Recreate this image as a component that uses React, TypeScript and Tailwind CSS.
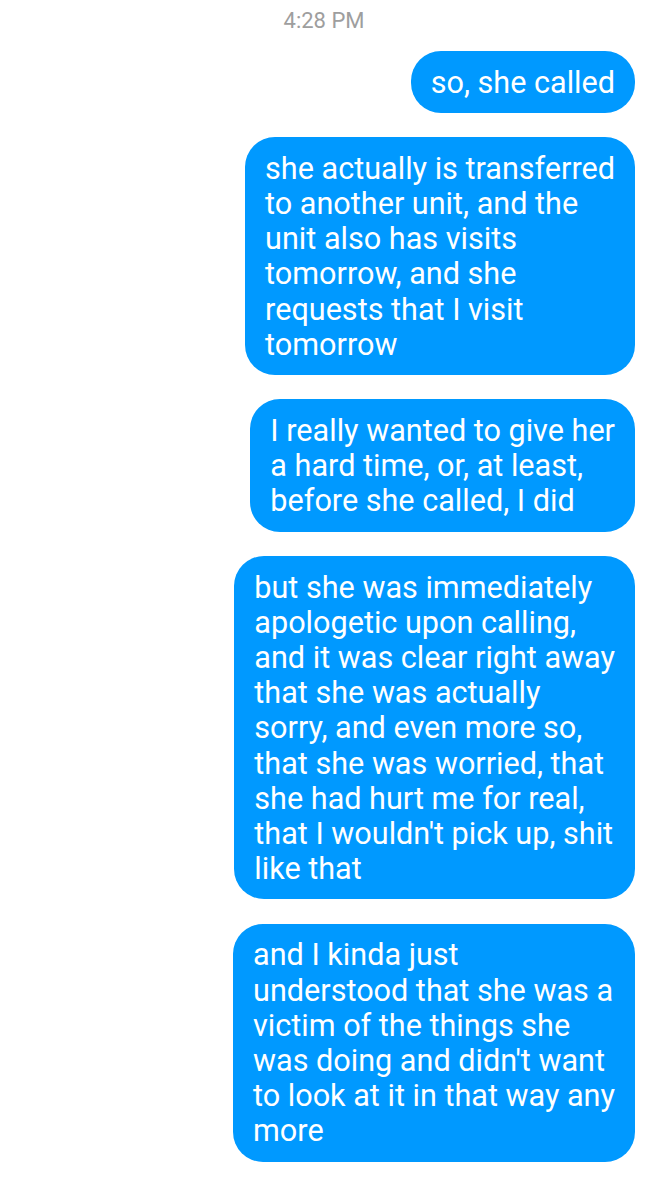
import React from 'react'

// 送信済みメッセージ一覧（行ごとに分割）
const messages: string[][] = [
  ['so, she called'],
  ['she actually is transferred', 'to another unit, and the', 'unit also has visits', 'tomorrow, and she', 'requests that I visit', 'tomorrow'],
  ['I really wanted to give her', 'a hard time, or, at least,', 'before she called, I did'],
  [
    'but she was immediately',
    'apologetic upon calling,',
    'and it was clear right away',
    'that she was actually',
    'sorry, and even more so,',
    'that she was worried, that',
    'she had hurt me for real,',
    "that I wouldn't pick up, shit",
    'like that',
  ],
  [
    'and I kinda just',
    'understood that she was a',
    'victim of the things she',
    "was doing and didn't want",
    'to look at it in that way any',
    'more',
  ],
]

export default function App() {
  return (
    <div className="min-h-[1178px] w-[648px] bg-white font-['Roboto','Liberation_Sans',sans-serif]">
      {/* タイムスタンプ */}
      <div className="flex h-[51px] justify-center pt-[7px]">
        <span className="text-[22px] leading-[28px] text-[#9e9e9e]">4:28 PM</span>
      </div>
      <div className="flex flex-col items-end gap-[24.5px] pr-[13px]">
        {messages.map((lines) => (
          <div
            key={lines[0]}
            className="whitespace-nowrap rounded-[30px] bg-[#0099ff] px-[20px] pt-[13.5px] pb-[13px] text-[30.6px] leading-[35.2px] text-white"
          >
            {lines.map((l, i) => (
              <div key={i}>{l}</div>
            ))}
          </div>
        ))}
      </div>
    </div>
  )
}
